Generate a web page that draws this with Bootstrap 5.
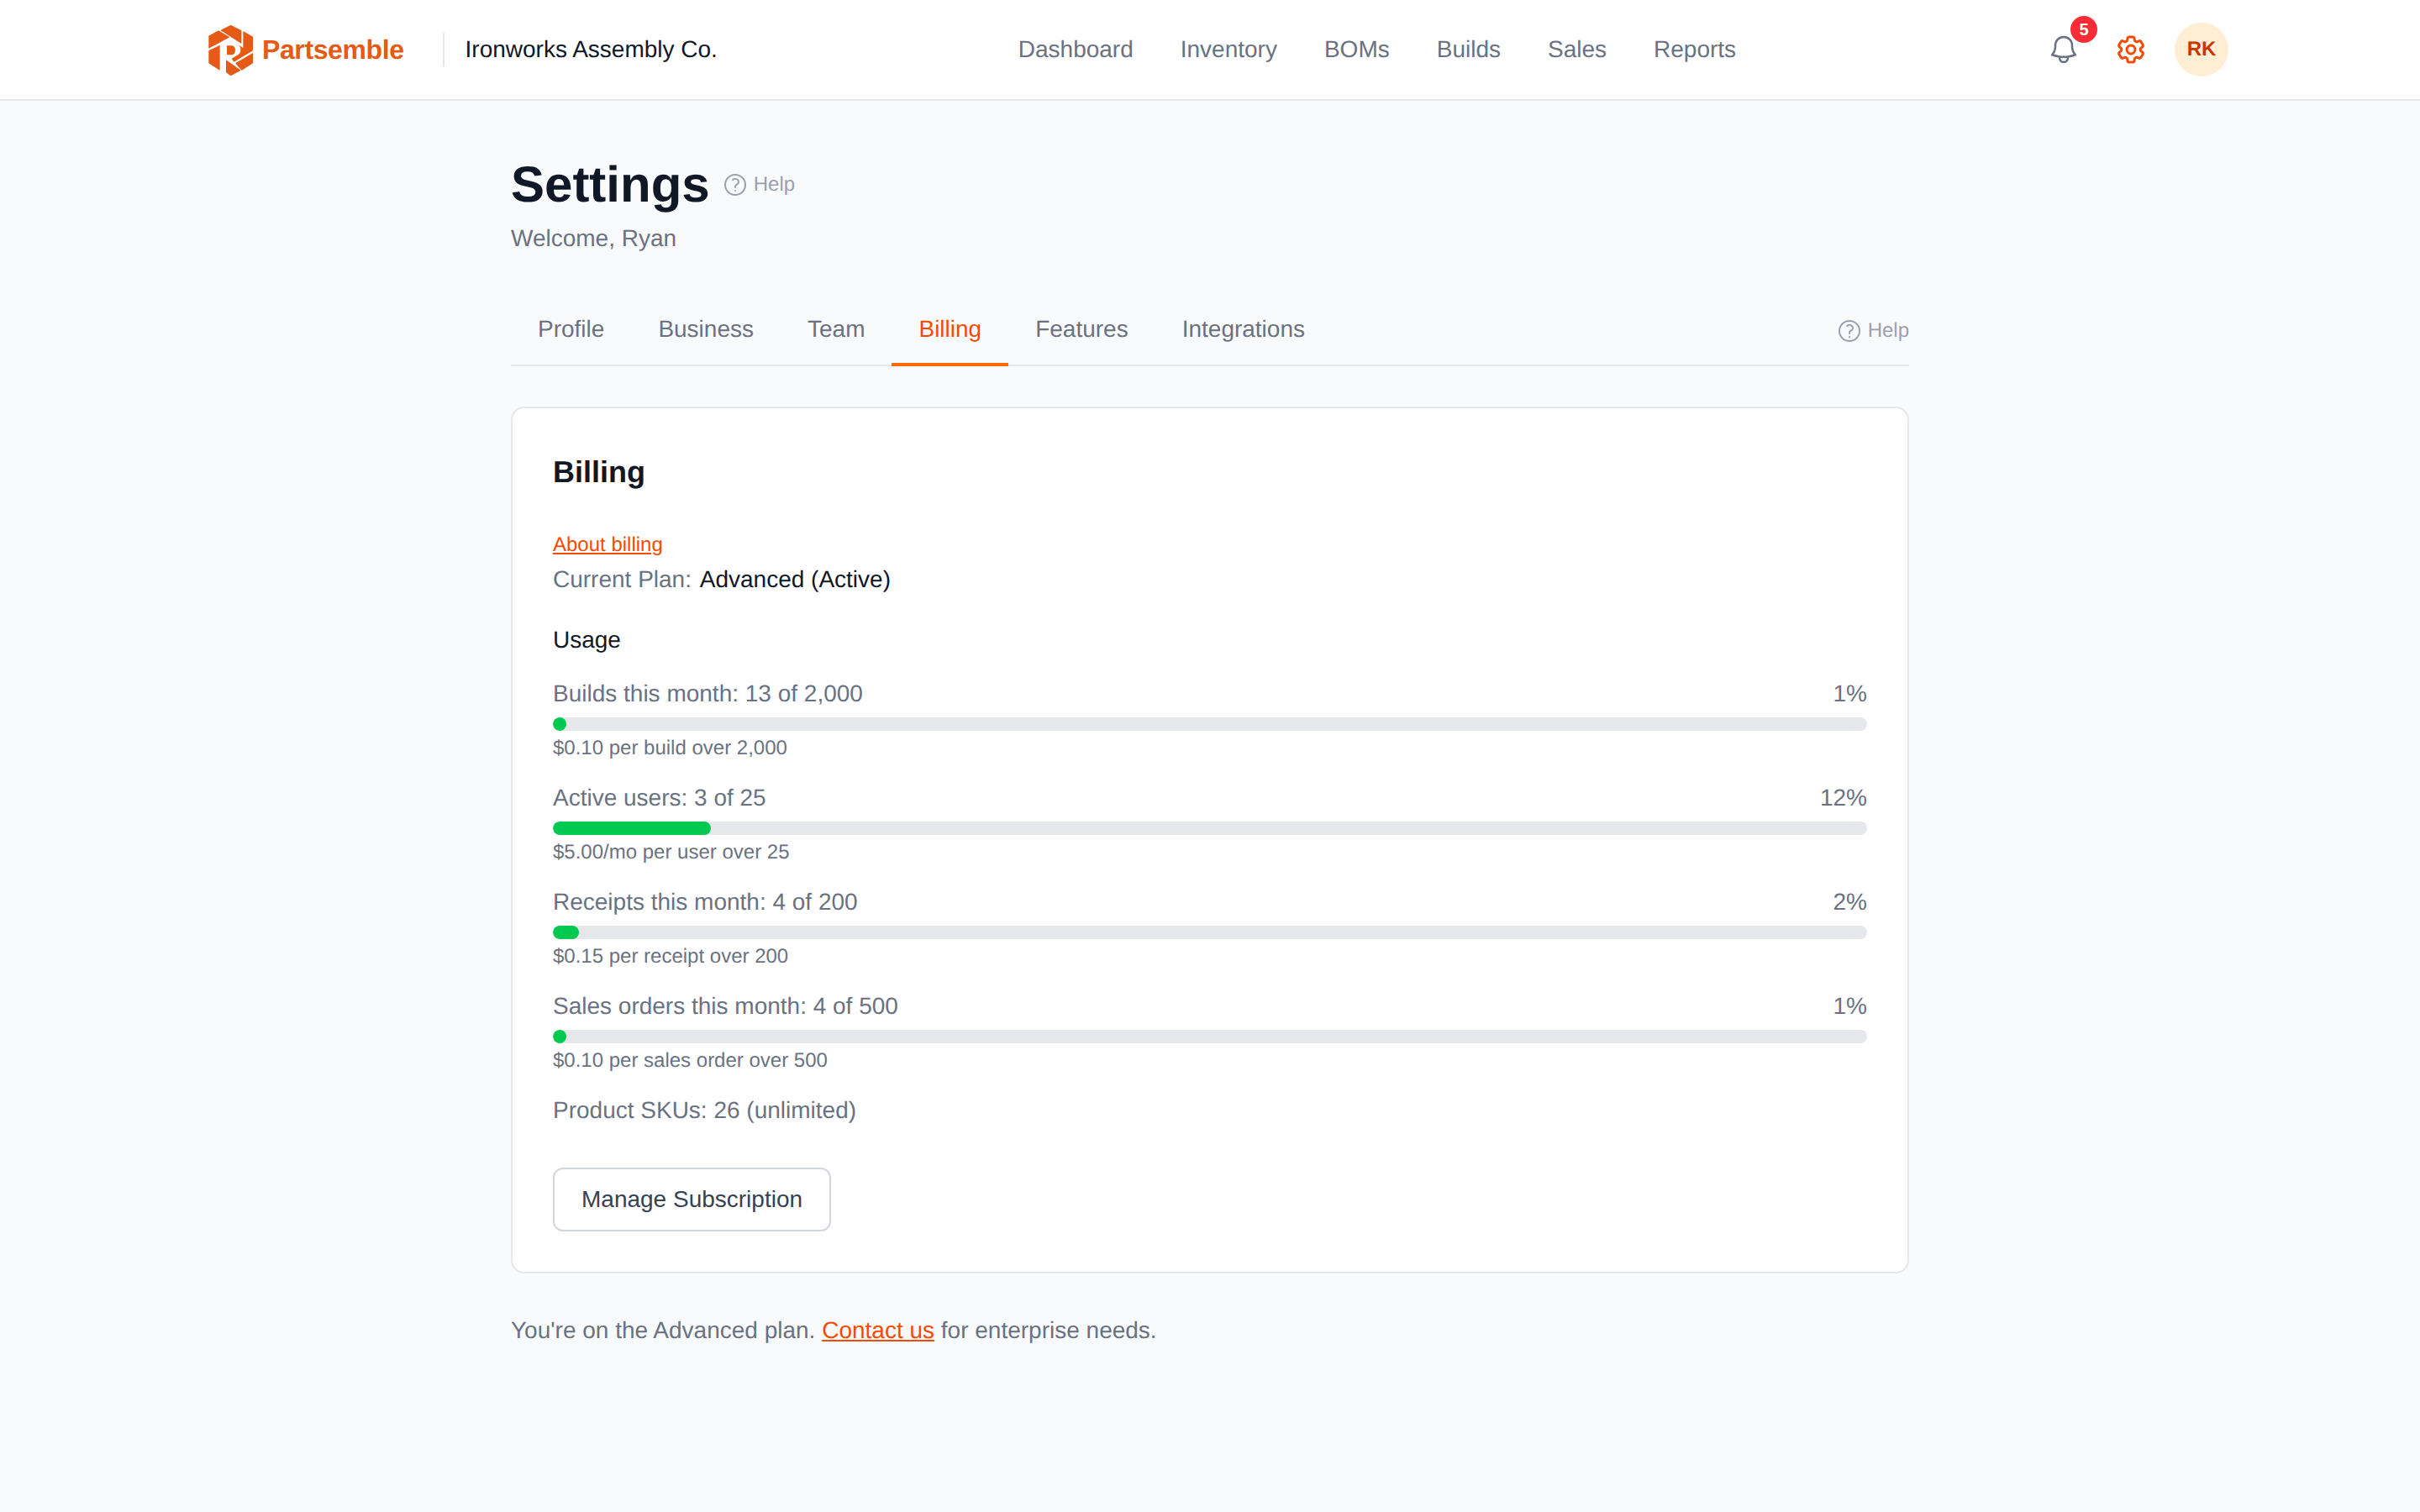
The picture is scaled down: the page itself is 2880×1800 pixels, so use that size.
<!DOCTYPE html>
<html lang="en">
<head>
  <meta charset="UTF-8" />
  <meta name="viewport" content="width=device-width, initial-scale=1.0"/>
  <title>Settings - Partsemble</title>
  <link href="https://cdn.jsdelivr.net/npm/bootstrap@5.3.2/dist/css/bootstrap.min.css" rel="stylesheet"/>

  <style>
    body {
      background-color: #f9fafb;
      color: #6a7282;
      font-family: "Liberation Sans", Arial, sans-serif;
      font-size: 28px;
      line-height: 40px;
      min-height: 100vh;
      text-rendering: geometricPrecision;
    }

    a { color: #f54a00; }

    .top-bar {
      height: 120px;
      padding: 0 228px 0 240px;
      background-color: #fff;
      border-bottom: 2px solid #e5e7eb;
    }
    .logo-mark { width: 66px; height: 75px; }
    .brand-name {
      color: #e55a14;
      font-size: 32px;
      font-weight: 700;
      letter-spacing: -0.4px;
      margin-left: 6px;
    }
    .brand-divider {
      width: 2px;
      height: 40px;
      margin: 0 25px 0 46px;
      background-color: #e5e7eb;
    }
    .company { color: #101828; }

    .main-links { gap: 56px; margin-right: 4px; }
    .main-links a { color: #6a7282; text-decoration: none; }

    .top-actions { gap: 24px; }
    .icon-btn {
      width: 56px;
      height: 56px;
      padding: 0;
      border: 0;
      background: none;
    }
    .icon-btn svg { width: 40px; height: 40px; }
    .bell-count {
      top: -12px;
      right: -12px;
      width: 32px;
      height: 32px;
      background-color: #fb2c36;
      color: #fff;
      font-size: 20px;
      font-weight: 700;
      line-height: 32px;
    }
    .avatar {
      width: 64px;
      height: 64px;
      background-color: #ffedd4;
      color: #ca3500;
      font-size: 24px;
      font-weight: 700;
    }

    .page { width: 1664px; padding-top: 64px; }
    .title-row { gap: 14px; }
    .page h1 {
      color: #101828;
      font-size: 60px;
      font-weight: 700;
      line-height: 72px;
      margin: 0;
    }
    .help-link {
      color: #99a1af;
      font-size: 24px;
      line-height: 32px;
      gap: 6px;
      text-decoration: none;
    }
    .help-link svg { width: 32px; height: 32px; }
    .welcome { margin: 8px 0 0; }

    .settings-tabs {
      margin-top: 44px;
      border-bottom: 2px solid #e5e7eb;
    }
    .settings-tabs .nav-link {
      color: #6a7282;
      font-size: 28px;
      line-height: 40px;
      padding: 24px 32px 20px;
      margin-bottom: -2px;
      border-bottom: 4px solid transparent;
    }
    .settings-tabs .nav-link.active {
      color: #f54a00;
      border-bottom-color: #ff6900;
    }
    .settings-tabs .help-link { padding-top: 6px; }

    .billing-card {
      margin-top: 48px;
      border: 2px solid #e5e7eb;
      border-radius: 16px;
    }
    .billing-card .card-body { padding: 48px; }
    .billing-card h2 {
      color: #101828;
      font-size: 36px;
      font-weight: 700;
      line-height: 56px;
      margin: 0 0 43px;
    }
    .about-link {
      display: block;
      font-size: 24px;
      line-height: 32px;
      margin-bottom: 5px;
    }
    .plan { margin-bottom: 32px; }
    .plan span, .usage-title { color: #101828; }
    .plan span { margin-left: 2px; }
    .usage-title { margin-bottom: 24px; }

    .usage-row { margin-bottom: 23px; }
    .usage-row .progress {
      height: 16px;
      margin-top: 8px;
      background-color: #e5e7eb;
      border-radius: 8px;
    }
    .usage-row .progress-bar {
      background-color: #00c950;
      border-radius: 8px;
    }
    .usage-note {
      font-size: 24px;
      line-height: 32px;
      margin-top: 5px;
    }

    .manage-btn {
      margin-top: 48px;
      padding: 16px 32px;
      color: #364153;
      background-color: #fff;
      border: 2px solid #d1d5dc;
      border-radius: 12px;
      font-size: 28px;
      line-height: 40px;
    }
    .footer-note { margin: 48px 0 0; }
  </style>
</head>
<body>

<header class="top-bar d-flex align-items-center justify-content-between">
  <div class="d-flex align-items-center">
    <svg class="logo-mark" viewBox="0 0 198 225" fill="#e55a14">
      <path d="M67 42 104 23 142 43V90Z"/>
      <path d="M25 62 60 43 100 67 25 107Z"/>
      <path d="M148 45 183 65V115L115 155 107 143 130 130C142 122 142 101 130 93L148 105Z"/>
      <path d="M183 123V160L143 185 120 160Z"/>
      <path d="M87 148 140 185 104 205 87 193Z"/>
      <path d="M25 115 65 95V185L25 160Z"/>
      <path d="M90 97H108C124 97 124 130 108 130H90Z"/>
    </svg>
    <span class="brand-name">Partsemble</span>
    <span class="brand-divider"></span>
    <span class="company">Ironworks Assembly Co.</span>
  </div>

  <nav class="main-links d-flex">
    <a href="#">Dashboard</a>
    <a href="#">Inventory</a>
    <a href="#">BOMs</a>
    <a href="#">Builds</a>
    <a href="#">Sales</a>
    <a href="#">Reports</a>
  </nav>

  <div class="top-actions d-flex align-items-center">
    <button class="icon-btn position-relative d-flex align-items-center justify-content-center" type="button">
      <svg viewBox="0 0 24 24" fill="none" stroke="#6a7282" stroke-width="1.5" stroke-linecap="round" stroke-linejoin="round">
        <path d="M14.857 17.082a23.848 23.848 0 0 0 5.454-1.31A8.967 8.967 0 0 1 18 9.75V9A6 6 0 0 0 6 9v.75a8.967 8.967 0 0 1-2.312 6.022c1.733.64 3.56 1.085 5.455 1.31m5.714 0a24.255 24.255 0 0 1-5.714 0m5.714 0a3 3 0 1 1-5.714 0"/>
      </svg>
      <span class="bell-count position-absolute rounded-circle text-center">5</span>
    </button>
    <button class="icon-btn d-flex align-items-center justify-content-center" type="button">
      <svg viewBox="0 0 24 24" fill="none" stroke="#f54a00" stroke-width="1.8" stroke-linecap="round" stroke-linejoin="round">
        <path d="M9.594 3.94c.09-.542.56-.94 1.11-.94h2.593c.55 0 1.02.398 1.11.94l.213 1.281c.063.374.313.686.645.87.074.04.147.083.22.127.325.196.72.257 1.075.124l1.217-.456a1.125 1.125 0 0 1 1.37.49l1.296 2.247a1.125 1.125 0 0 1-.26 1.431l-1.003.827c-.293.241-.438.613-.43.992a7.723 7.723 0 0 1 0 .255c-.008.378.137.75.43.991l1.004.827c.424.35.534.955.26 1.43l-1.298 2.247a1.125 1.125 0 0 1-1.369.491l-1.217-.456c-.355-.133-.75-.072-1.076.124a6.47 6.47 0 0 1-.22.128c-.331.183-.581.495-.644.869l-.213 1.281c-.09.543-.56.94-1.11.94h-2.594c-.55 0-1.019-.398-1.11-.94l-.213-1.281c-.062-.374-.312-.686-.644-.87a6.52 6.52 0 0 1-.22-.127c-.325-.196-.72-.257-1.076-.124l-1.217.456a1.125 1.125 0 0 1-1.369-.49l-1.297-2.247a1.125 1.125 0 0 1 .26-1.431l1.004-.827c.292-.24.437-.613.43-.991a6.932 6.932 0 0 1 0-.255c.007-.38-.138-.751-.43-.992l-1.004-.827a1.125 1.125 0 0 1-.26-1.43l1.297-2.247a1.125 1.125 0 0 1 1.37-.491l1.216.456c.356.133.751.072 1.076-.124.072-.044.146-.086.22-.128.332-.183.582-.495.644-.869l.214-1.28Z"/>
        <path d="M15 12a3 3 0 1 1-6 0 3 3 0 0 1 6 0Z"/>
      </svg>
    </button>
    <span class="avatar rounded-circle d-flex align-items-center justify-content-center">RK</span>
  </div>
</header>

<main class="page mx-auto">
  <div class="title-row d-flex align-items-center">
    <h1>Settings</h1>
    <a class="help-link d-flex align-items-center" href="#">
      <svg viewBox="0 0 24 24" fill="none" stroke="currentColor" stroke-width="1.5" stroke-linecap="round" stroke-linejoin="round">
        <path d="M9.879 7.519c1.171-1.025 3.071-1.025 4.242 0 1.172 1.025 1.172 2.687 0 3.712-.203.179-.43.326-.67.442-.745.361-1.45.999-1.45 1.827v.75M21 12a9 9 0 1 1-18 0 9 9 0 0 1 18 0Zm-9 5.25h.008v.008H12v-.008Z"/>
      </svg>
      Help
    </a>
  </div>
  <p class="welcome">Welcome, Ryan</p>

  <div class="settings-tabs d-flex align-items-center">
    <ul class="nav">
      <li class="nav-item"><a class="nav-link" href="#">Profile</a></li>
      <li class="nav-item"><a class="nav-link" href="#">Business</a></li>
      <li class="nav-item"><a class="nav-link" href="#">Team</a></li>
      <li class="nav-item"><a class="nav-link active" href="#">Billing</a></li>
      <li class="nav-item"><a class="nav-link" href="#">Features</a></li>
      <li class="nav-item"><a class="nav-link" href="#">Integrations</a></li>
    </ul>
    <a class="help-link d-flex align-items-center ms-auto" href="#">
      <svg viewBox="0 0 24 24" fill="none" stroke="currentColor" stroke-width="1.5" stroke-linecap="round" stroke-linejoin="round">
        <path d="M9.879 7.519c1.171-1.025 3.071-1.025 4.242 0 1.172 1.025 1.172 2.687 0 3.712-.203.179-.43.326-.67.442-.745.361-1.45.999-1.45 1.827v.75M21 12a9 9 0 1 1-18 0 9 9 0 0 1 18 0Zm-9 5.25h.008v.008H12v-.008Z"/>
      </svg>
      Help
    </a>
  </div>

  <section class="card billing-card">
    <div class="card-body">
      <h2>Billing</h2>
      <a class="about-link" href="#">About billing</a>
      <div class="plan">Current Plan: <span>Advanced (Active)</span></div>
      <div class="usage-title">Usage</div>

      <div class="usage-row">
        <div class="d-flex justify-content-between"><span>Builds this month: 13 of 2,000</span><span>1%</span></div>
        <div class="progress"><div class="progress-bar" style="width: 1%"></div></div>
        <div class="usage-note">$0.10 per build over 2,000</div>
      </div>
      <div class="usage-row">
        <div class="d-flex justify-content-between"><span>Active users: 3 of 25</span><span>12%</span></div>
        <div class="progress"><div class="progress-bar" style="width: 12%"></div></div>
        <div class="usage-note">$5.00/mo per user over 25</div>
      </div>
      <div class="usage-row">
        <div class="d-flex justify-content-between"><span>Receipts this month: 4 of 200</span><span>2%</span></div>
        <div class="progress"><div class="progress-bar" style="width: 2%"></div></div>
        <div class="usage-note">$0.15 per receipt over 200</div>
      </div>
      <div class="usage-row">
        <div class="d-flex justify-content-between"><span>Sales orders this month: 4 of 500</span><span>1%</span></div>
        <div class="progress"><div class="progress-bar" style="width: 1%"></div></div>
        <div class="usage-note">$0.10 per sales order over 500</div>
      </div>

      <div>Product SKUs: 26 (unlimited)</div>
      <button class="btn manage-btn" type="button">Manage Subscription</button>
    </div>
  </section>

  <p class="footer-note">You're on the Advanced plan. <a href="#">Contact us</a> for enterprise needs.</p>
</main>

<script src="https://cdn.jsdelivr.net/npm/bootstrap@5.3.2/dist/js/bootstrap.bundle.min.js"></script>
</body>
</html>
